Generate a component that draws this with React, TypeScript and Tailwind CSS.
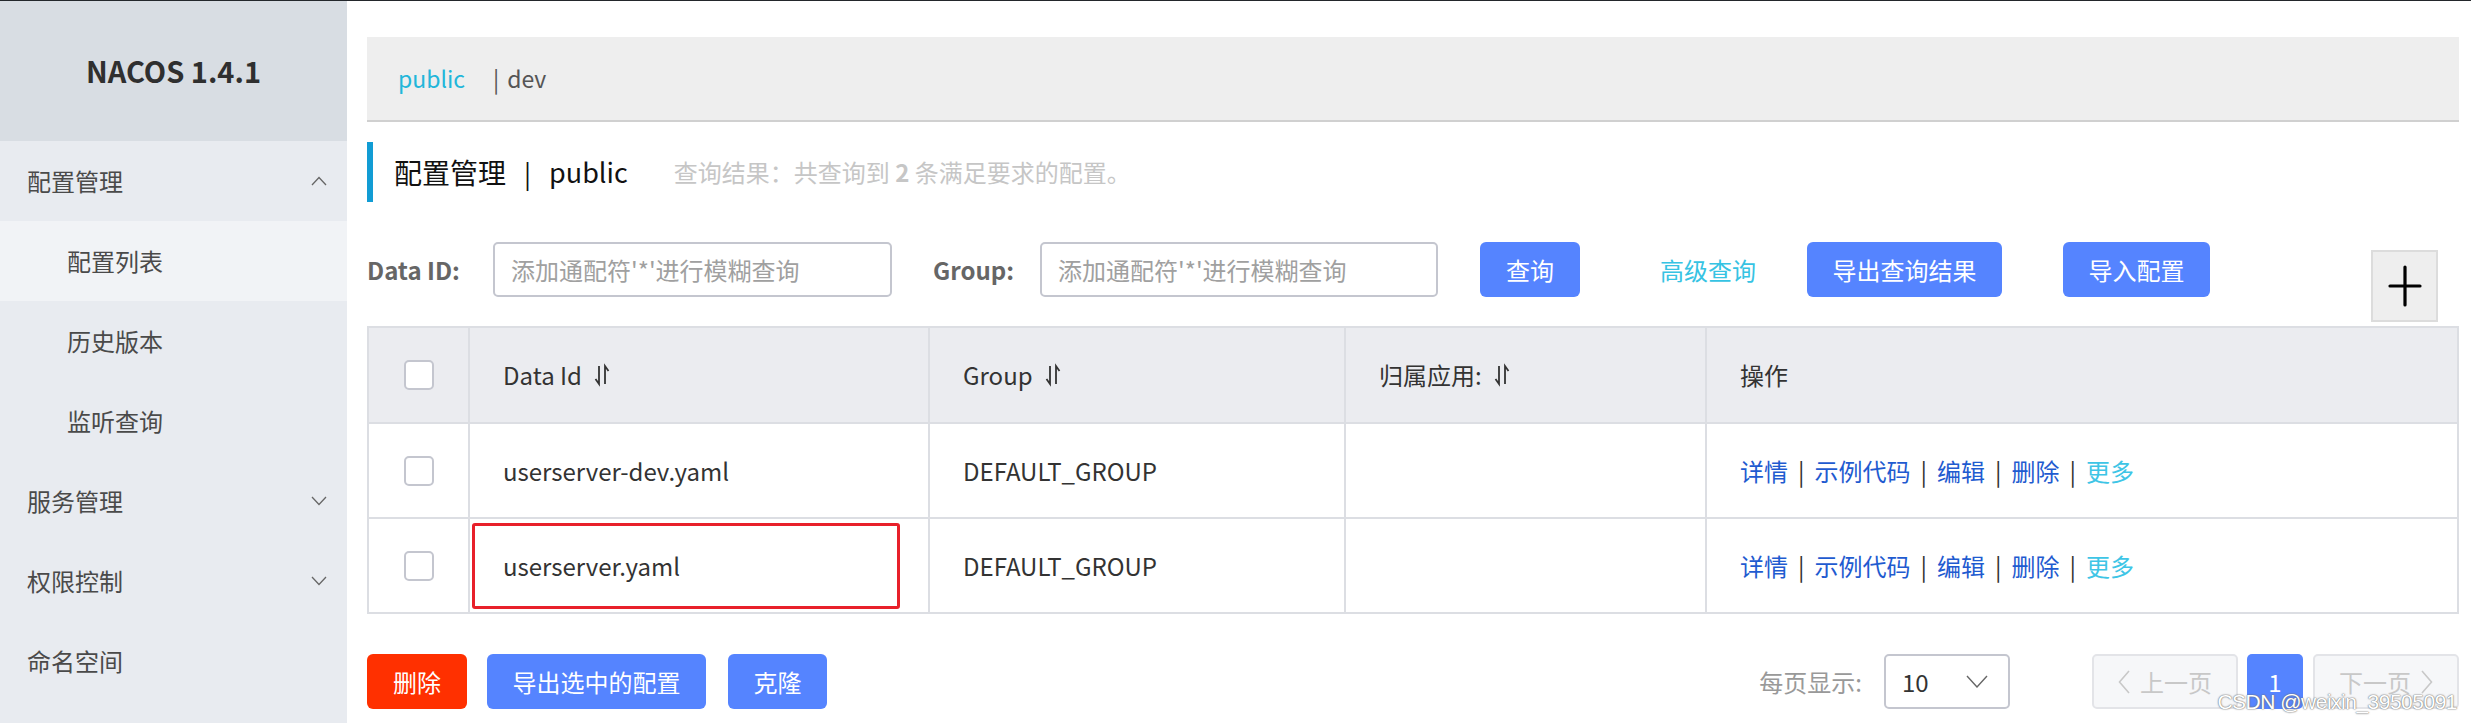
import React from "react";

/* Nacos 1.4.1 — 配置管理 list page */

const SortIcon = () => (
  <svg width="16" height="24" viewBox="0 0 16 24" className="ml-3 inline-block" fill="none" stroke="#333" strokeWidth="1.8">
    <path d="M5 3 V21 L1.5 16" />
    <path d="M11 21 V3 L14.5 8" />
  </svg>
);

const Chevron = ({ up }: { up?: boolean }) => (
  <svg width="16" height="10" viewBox="0 0 16 10" fill="none" stroke="#666" strokeWidth="1.3">
    {up ? <path d="M1 9 L8 1.5 L15 9" /> : <path d="M1 1 L8 8.5 L15 1" />}
  </svg>
);

const MenuItem = ({ label, sub, active, chevron }: { label: string; sub?: boolean; active?: boolean; chevron?: "up" | "down" }) => (
  <div
    className={`flex h-[80px] items-center justify-between pr-[20px] text-[24px] text-[#4a4a4a] ${
      sub ? "pl-[67px]" : "pl-[27px]"
    } ${active ? "bg-[#f1f3f6]" : ""}`}
  >
    <span>{label}</span>
    {chevron && <Chevron up={chevron === "up"} />}
  </div>
);

const Button = ({ children, className = "" }: { children: React.ReactNode; className?: string }) => (
  <button
    type="button"
    className={`flex h-[55px] items-center justify-center rounded-[6px] text-[24px] text-white ${className}`}
  >
    {children}
  </button>
);

const Checkbox = () => <div className="mx-auto h-[30px] w-[30px] rounded-[5px] border-2 border-[#c4c6cf] bg-white" />;

const Sep = () => <span className="mx-[10px] text-[#333]">|</span>;

const Ops = () => (
  <div className="flex items-center text-[24px] text-[#1f5bd0]">
    <span>详情</span>
    <Sep />
    <span>示例代码</span>
    <Sep />
    <span>编辑</span>
    <Sep />
    <span>删除</span>
    <Sep />
    <span className="text-[#3ec5e6]">更多</span>
  </div>
);

const rows = [
  { id: "userserver-dev.yaml", group: "DEFAULT_GROUP", marked: false },
  { id: "userserver.yaml", group: "DEFAULT_GROUP", marked: true },
];

export default function App() {
  return (
    <div className="flex h-[723px] w-[2471px] overflow-hidden border-t border-[#23272b] bg-white font-['Noto_Sans_CJK_SC','Noto_Sans',sans-serif] text-[#333]">
      {/* sidebar */}
      <aside className="flex w-[347px] shrink-0 flex-col bg-[#e8ebf0]">
        <div className="flex h-[140px] items-center justify-center bg-[#d8dde3] text-[29px] font-bold text-[#2f2f2f]">
          NACOS 1.4.1
        </div>
        <MenuItem label="配置管理" chevron="up" />
        <MenuItem label="配置列表" sub active />
        <MenuItem label="历史版本" sub />
        <MenuItem label="监听查询" sub />
        <MenuItem label="服务管理" chevron="down" />
        <MenuItem label="权限控制" chevron="down" />
        <MenuItem label="命名空间" />
      </aside>

      {/* main */}
      <main className="relative flex flex-1 flex-col pl-[20px] pr-[12px] pt-[36px]">
        {/* namespace tabs */}
        <div className="flex h-[85px] items-center border-b-2 border-[#d0d0d0] bg-[#eeeeee] pl-[31px] text-[23px]">
          <span className="text-[#22b6da]">public</span>
          <span className="ml-[28px] text-[#555]">|</span>
          <span className="ml-[8px] text-[#555]">dev</span>
        </div>

        {/* title */}
        <div className="mt-[20px] flex h-[60px] items-center border-l-[6px] border-[#119cd4] pl-[21px]">
          <span className="text-[28px] text-[#111]">配置管理</span>
          <span className="mx-[18px] text-[26px] text-[#111]">|</span>
          <span className="text-[27px] text-[#111]">public</span>
          <span className="ml-[46px] text-[24px] text-[#c6c6c6]">
            查询结果：共查询到 <b className="font-bold">2</b> 条满足要求的配置。
          </span>
        </div>

        {/* search */}
        <div className="mt-[40px] flex h-[84px] items-start">
          <div className="flex h-[55px] items-center">
            <span className="w-[126px] text-[24px] font-bold text-[#666]">Data ID:</span>
            <div className="flex h-[55px] w-[399px] items-center rounded-[5px] border-2 border-[#c4c6cf] pl-[16px] text-[24px] text-[#a0a0a0]">
              添加通配符'*'进行模糊查询
            </div>
            <span className="ml-[41px] w-[107px] text-[24px] font-bold text-[#666]">Group:</span>
            <div className="flex h-[55px] w-[398px] items-center rounded-[5px] border-2 border-[#c4c6cf] pl-[16px] text-[24px] text-[#a0a0a0]">
              添加通配符'*'进行模糊查询
            </div>
            <Button className="ml-[42px] w-[100px] bg-[#5584ff]">查询</Button>
            <span className="ml-[80px] text-[24px] text-[#36c3e3]">高级查询</span>
            <Button className="ml-[51px] w-[195px] bg-[#5584ff]">导出查询结果</Button>
            <Button className="ml-[61px] w-[147px] bg-[#5584ff]">导入配置</Button>
          </div>
          <div className="ml-auto mr-[21px] mt-[8px] flex h-[72px] w-[67px] items-center justify-center border-2 border-[#dcdcdc] bg-[#eeeeee]">
            <svg width="34" height="42" viewBox="0 0 34 42" stroke="#000" strokeWidth="3.2" strokeLinecap="round">
              <path d="M17 2 V40 M2 21 H32" />
            </svg>
          </div>
        </div>

        {/* table */}
        <table className="w-full table-fixed border-collapse text-[24px]">
          <colgroup>
            <col className="w-[101px]" />
            <col className="w-[460px]" />
            <col className="w-[416px]" />
            <col className="w-[361px]" />
            <col />
          </colgroup>
          <thead>
            <tr className="h-[96px] bg-[#ebecf0] text-left">
              <th className="border-2 border-[#dcdee3] font-normal">
                <Checkbox />
              </th>
              <th className="border-2 border-[#dcdee3] pl-[33px] font-normal">
                <span className="flex items-center">
                  Data Id
                  <SortIcon />
                </span>
              </th>
              <th className="border-2 border-[#dcdee3] pl-[33px] font-normal">
                <span className="flex items-center">
                  Group
                  <SortIcon />
                </span>
              </th>
              <th className="border-2 border-[#dcdee3] pl-[33px] font-normal">
                <span className="flex items-center">
                  归属应用:
                  <SortIcon />
                </span>
              </th>
              <th className="border-2 border-[#dcdee3] pl-[33px] font-normal">操作</th>
            </tr>
          </thead>
          <tbody>
            {rows.map((r) => (
              <tr key={r.id} className="h-[95px]">
                <td className="border-2 border-[#dcdee3]">
                  <Checkbox />
                </td>
                <td className="relative border-2 border-[#dcdee3] pl-[33px]">
                  {r.id}
                  {r.marked && (
                    <div className="absolute left-[2px] top-[4px] h-[86px] w-[428px] rounded-[3px] border-[3px] border-[#e8202a]" />
                  )}
                </td>
                <td className="border-2 border-[#dcdee3] pl-[33px]">{r.group}</td>
                <td className="border-2 border-[#dcdee3]" />
                <td className="border-2 border-[#dcdee3] pl-[33px]">
                  <Ops />
                </td>
              </tr>
            ))}
          </tbody>
        </table>

        {/* footer */}
        <div className="mt-[40px] flex items-center">
          <Button className="w-[100px] bg-[#ff3000]">删除</Button>
          <Button className="ml-[20px] w-[219px] bg-[#5584ff]">导出选中的配置</Button>
          <Button className="ml-[22px] w-[99px] bg-[#5584ff]">克隆</Button>

          <span className="ml-auto text-[24px] text-[#999]">每页显示:</span>
          <div className="ml-[22px] flex h-[55px] w-[126px] items-center justify-between rounded-[5px] border-2 border-[#c4c6cf] pl-[16px] pr-[20px] text-[24px] text-[#333]">
            <span>10</span>
            <svg width="22" height="13" viewBox="0 0 22 13" fill="none" stroke="#666" strokeWidth="1.4">
              <path d="M1 1 L11 12 L21 1" />
            </svg>
          </div>
          <div className="ml-[82px] flex h-[55px] w-[146px] items-center justify-center gap-[10px] rounded-[5px] border-2 border-[#e3e4e8] bg-[#f6f7f9] text-[24px] text-[#c8c8c8]">
            <svg width="12" height="24" viewBox="0 0 12 24" fill="none" stroke="#c8c8c8" strokeWidth="1.6">
              <path d="M11 1 L1.5 12 L11 23" />
            </svg>
            上一页
          </div>
          <div className="ml-[9px] flex h-[55px] w-[56px] items-center justify-center rounded-[5px] bg-[#5584ff] text-[24px] text-white">
            1
          </div>
          <div className="ml-[10px] flex h-[55px] w-[146px] items-center justify-center gap-[10px] rounded-[5px] border-2 border-[#e3e4e8] bg-[#f6f7f9] text-[24px] text-[#c8c8c8]">
            下一页
            <svg width="12" height="24" viewBox="0 0 12 24" fill="none" stroke="#c8c8c8" strokeWidth="1.6">
              <path d="M1 1 L10.5 12 L1 23" />
            </svg>
          </div>
        </div>

        {/* CSDN watermark */}
        <div className="absolute bottom-[6px] right-[14px] font-['Liberation_Sans',sans-serif] text-[21px] tracking-[-0.5px] text-white [text-shadow:0_0_2px_#777,0_0_1px_#555]">
          CSDN @weixin_39505091
        </div>
      </main>
    </div>
  );
}
